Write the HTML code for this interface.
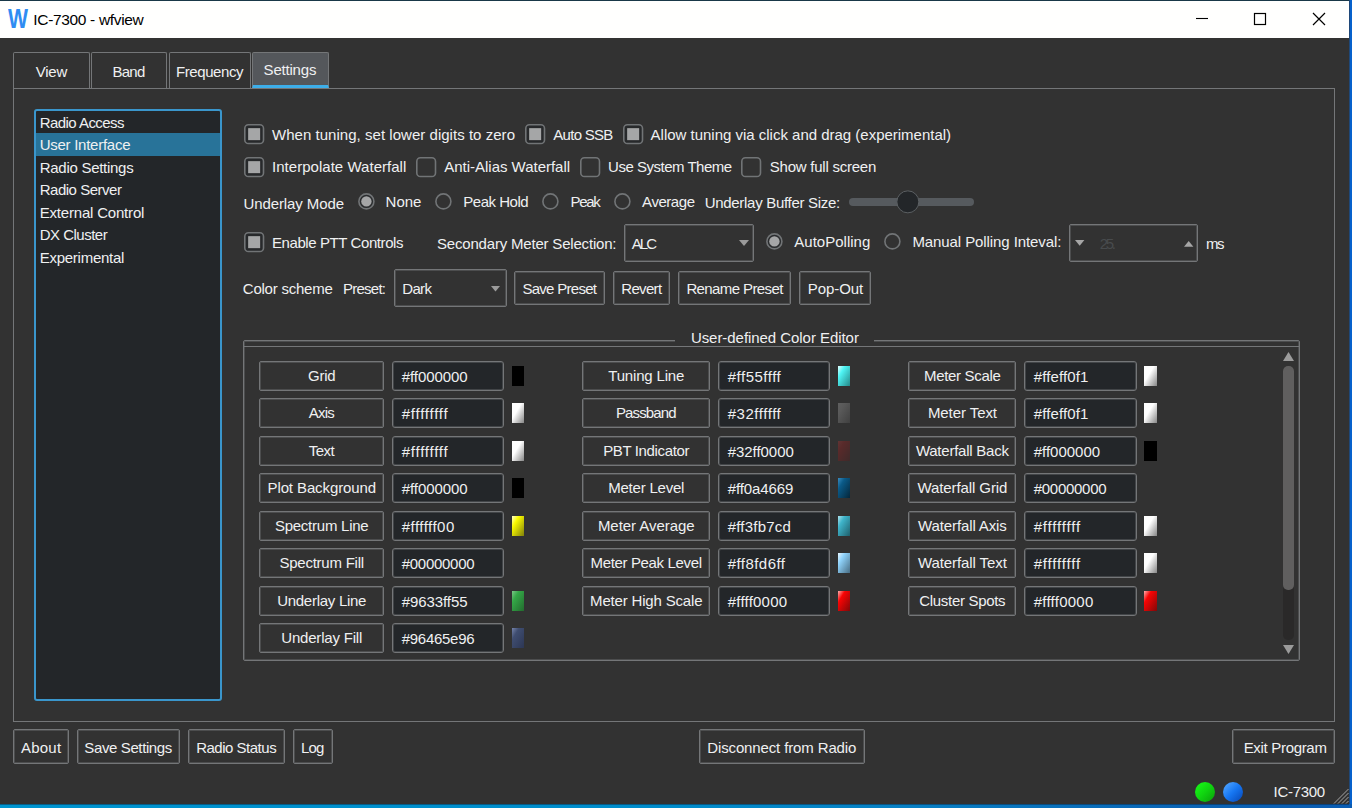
<!DOCTYPE html>
<html><head><meta charset="utf-8"><title>IC-7300 - wfview</title>
<style>
html,body{margin:0;padding:0}
body{width:1352px;height:808px;overflow:hidden;position:relative;background:linear-gradient(90deg,#0095d0 0%,#008ccb 50%,#0880c4 67%,#0a62b4 89%,#0a5cb2 100%);font-family:"Liberation Sans", sans-serif;color:#eff0f1}
#edge{position:absolute;left:1349px;top:0;width:3px;height:804px;background:linear-gradient(90deg,#1f4878 0,#1f4878 1px,#0661cc 1px)}
.b{position:absolute;box-sizing:border-box}
.s{position:absolute;overflow:visible}
.t{position:absolute;white-space:pre;line-height:20px;height:20px;font-size:15px;color:#eff0f1}
</style></head>
<body>
<div id="edge"></div>
<div style="position:absolute;left:0;top:0;width:1349px;height:804px;background:#323232"></div>
<div style="position:absolute;left:0;top:0;width:1349px;height:1px;background:#193848"></div>
<div style="position:absolute;left:0;top:1px;width:1349px;height:37px;background:#fffffe"></div>
<div style="position:absolute;left:0;top:804px;width:1349px;height:1px;background:rgba(10,30,50,.45)"></div>
<svg style="position:absolute;left:1190px;top:8px" width="150" height="24" viewBox="0 0 150 24"><path d="M6 10.5H18" stroke="#000" stroke-width="1.1" fill="none"/><rect x="64.5" y="5.5" width="11" height="11" stroke="#000" stroke-width="1.2" fill="none"/><path d="M123 5L135 17M135 5L123 17" stroke="#000" stroke-width="1.2" fill="none"/></svg>
<div class="b" style="left:13px;top:88px;width:1322px;height:634px;border:1px solid #747678;"></div>
<div class="b" style="left:13px;top:52px;width:77px;height:37px;border:1px solid #747678;border-bottom:none;border-radius:2px 2px 0 0;"></div>
<div class="b" style="left:91px;top:52px;width:76px;height:37px;border:1px solid #747678;border-bottom:none;border-radius:2px 2px 0 0;"></div>
<div class="b" style="left:168.5px;top:52px;width:82.5px;height:37px;border:1px solid #747678;border-bottom:none;border-radius:2px 2px 0 0;"></div>
<div class="b" style="left:252px;top:52px;width:77px;height:36px;border:1px solid #747678;border-bottom:3px solid #3daee9;border-radius:2px 2px 0 0;background:#54575b;"></div>
<div class="b" style="left:34px;top:109px;width:188px;height:592px;border:2px solid #3a96cc;border-radius:3px;background:#232629;"></div>
<div class="b" style="left:36px;top:133px;width:184px;height:23px;background:#287399;"></div>
<svg class="s" style="left:244px;top:124px" width="21" height="21"><rect x="0.8" y="0.8" width="18.7" height="18.7" rx="3.6" fill="#27292b" stroke="#717476" stroke-width="1.6"/><rect x="4.15" y="4.15" width="12" height="12" fill="#a5a6a7"/></svg>
<svg class="s" style="left:525px;top:124px" width="21" height="21"><rect x="0.8" y="0.8" width="18.7" height="18.7" rx="3.6" fill="#27292b" stroke="#717476" stroke-width="1.6"/><rect x="4.15" y="4.15" width="12" height="12" fill="#a5a6a7"/></svg>
<svg class="s" style="left:622.5px;top:124px" width="21" height="21"><rect x="0.8" y="0.8" width="18.7" height="18.7" rx="3.6" fill="#27292b" stroke="#717476" stroke-width="1.6"/><rect x="4.15" y="4.15" width="12" height="12" fill="#a5a6a7"/></svg>
<svg class="s" style="left:244px;top:157px" width="21" height="21"><rect x="0.8" y="0.8" width="18.7" height="18.7" rx="3.6" fill="#27292b" stroke="#717476" stroke-width="1.6"/><rect x="4.15" y="4.15" width="12" height="12" fill="#a5a6a7"/></svg>
<svg class="s" style="left:416.2px;top:157px" width="21" height="21"><rect x="0.8" y="0.8" width="18.7" height="18.7" rx="3.6" fill="none" stroke="#717476" stroke-width="1.6"/></svg>
<svg class="s" style="left:580.3px;top:157px" width="21" height="21"><rect x="0.8" y="0.8" width="18.7" height="18.7" rx="3.6" fill="none" stroke="#717476" stroke-width="1.6"/></svg>
<svg class="s" style="left:741.3px;top:157px" width="21" height="21"><rect x="0.8" y="0.8" width="18.7" height="18.7" rx="3.6" fill="none" stroke="#717476" stroke-width="1.6"/></svg>
<svg class="s" style="left:357.5px;top:192.7px" width="17" height="17"><circle cx="8.4" cy="8.4" r="7.5" fill="#2a2c2e" stroke="#717476" stroke-width="1.6"/><circle cx="8.4" cy="8.4" r="5.2" fill="#a5a6a7"/></svg>
<svg class="s" style="left:435px;top:192.7px" width="17" height="17"><circle cx="8.4" cy="8.4" r="7.5" fill="none" stroke="#717476" stroke-width="1.6"/></svg>
<svg class="s" style="left:542.4px;top:192.7px" width="17" height="17"><circle cx="8.4" cy="8.4" r="7.5" fill="none" stroke="#717476" stroke-width="1.6"/></svg>
<svg class="s" style="left:613.7px;top:192.7px" width="17" height="17"><circle cx="8.4" cy="8.4" r="7.5" fill="none" stroke="#717476" stroke-width="1.6"/></svg>
<div class="b" style="left:849px;top:198px;width:125px;height:8px;background:#565a5e;border-radius:4px;"></div>
<svg class="s" style="left:895px;top:189px" width="26" height="26"><circle cx="12.85" cy="12.85" r="11" fill="#232629" stroke="#5c6063" stroke-width="1"/></svg>
<svg class="s" style="left:244px;top:231.5px" width="21" height="21"><rect x="0.8" y="0.8" width="18.7" height="18.7" rx="3.6" fill="#27292b" stroke="#717476" stroke-width="1.6"/><rect x="4.15" y="4.15" width="12" height="12" fill="#a5a6a7"/></svg>
<div class="b" style="left:624px;top:224px;width:130px;height:38px;border:1px solid #747678;border-radius:2px;box-shadow:inset 0 0 0 1px rgba(118,121,124,.38);"></div>
<svg style="position:absolute;left:738.5px;top:240px" width="10" height="6"><path d="M0 0H10L5 6Z" fill="#9b9b9b"/></svg>
<svg class="s" style="left:766px;top:232.7px" width="17" height="17"><circle cx="8.4" cy="8.4" r="7.5" fill="#2a2c2e" stroke="#717476" stroke-width="1.6"/><circle cx="8.4" cy="8.4" r="5.2" fill="#a5a6a7"/></svg>
<svg class="s" style="left:883.5px;top:232.7px" width="17" height="17"><circle cx="8.4" cy="8.4" r="7.5" fill="none" stroke="#717476" stroke-width="1.6"/></svg>
<div class="b" style="left:1069px;top:224px;width:129px;height:38px;border:1px solid #747678;border-radius:2px;box-shadow:inset 0 0 0 1px rgba(118,121,124,.38);"></div>
<svg class="s" style="left:1075px;top:240px" width="10" height="6"><path d="M0 0H9.4L4.7 5.8Z" fill="#a6a6a6"/></svg>
<svg class="s" style="left:1183.8px;top:240.5px" width="10" height="6"><path d="M0 5.8H9.4L4.7 0Z" fill="#a6a6a6"/></svg>
<div class="b" style="left:394px;top:269px;width:113px;height:38px;border:1px solid #747678;border-radius:2px;box-shadow:inset 0 0 0 1px rgba(118,121,124,.38);"></div>
<svg style="position:absolute;left:490.5px;top:285.5px" width="9" height="6"><path d="M0 0H9L4.5 5.5Z" fill="#9b9b9b"/></svg>
<div class="b" style="left:514.2px;top:271px;width:90.5px;height:34px;border:1px solid #747678;border-radius:2px;box-shadow:inset 0 0 0 1px rgba(118,121,124,.38);"></div>
<div class="b" style="left:613px;top:271px;width:56.799999999999955px;height:34px;border:1px solid #747678;border-radius:2px;box-shadow:inset 0 0 0 1px rgba(118,121,124,.38);"></div>
<div class="b" style="left:678.1px;top:271px;width:113.29999999999995px;height:34px;border:1px solid #747678;border-radius:2px;box-shadow:inset 0 0 0 1px rgba(118,121,124,.38);"></div>
<div class="b" style="left:799.1px;top:271px;width:72.19999999999993px;height:34px;border:1px solid #747678;border-radius:2px;box-shadow:inset 0 0 0 1px rgba(118,121,124,.38);"></div>
<div class="b" style="left:243px;top:340px;width:1057px;height:321px;border:1px solid #747678;border-radius:2px;box-shadow:inset 0 0 0 1px rgba(118,121,124,.38);"></div>
<div class="b" style="left:674.5px;top:330px;width:199.5px;height:16px;background:#323232;"></div>
<div class="b" style="left:243.3px;top:346px;width:1056.5px;height:1px;background:#747678;"></div>
<svg style="position:absolute;left:1282.5px;top:352px" width="11" height="9"><path d="M0 9H11L5.5 0Z" fill="#9b9b9b"/></svg>
<div class="b" style="left:1283px;top:366px;width:11px;height:273.5px;background:#2a2929;border-radius:5px;"></div>
<div class="b" style="left:1283px;top:366px;width:11px;height:224px;background:#605f5f;border-radius:5px;"></div>
<svg style="position:absolute;left:1282.5px;top:644.5px" width="11" height="9"><path d="M0 0H11L5.5 9Z" fill="#9b9b9b"/></svg>
<div class="b" style="left:259px;top:361px;width:125px;height:30px;border:1px solid #747678;border-radius:2px;box-shadow:inset 0 0 0 1px rgba(118,121,124,.38);"></div>
<div class="b" style="left:392px;top:361px;width:112px;height:30px;border:1px solid #747678;border-radius:3px;background:#232629;box-shadow:inset 0 0 0 1px rgba(118,121,124,.38);"></div>
<div class="b" style="left:512px;top:366px;width:12px;height:20px;background:#000;"></div>
<div class="b" style="left:259px;top:398px;width:125px;height:30px;border:1px solid #747678;border-radius:2px;box-shadow:inset 0 0 0 1px rgba(118,121,124,.38);"></div>
<div class="b" style="left:392px;top:398px;width:112px;height:30px;border:1px solid #747678;border-radius:3px;background:#232629;box-shadow:inset 0 0 0 1px rgba(118,121,124,.38);"></div>
<div class="b" style="left:512px;top:403px;width:12px;height:20px;background:linear-gradient(121deg,#fff 0%,#fff 40%,#858585 100%);"></div>
<div class="b" style="left:259px;top:436px;width:125px;height:30px;border:1px solid #747678;border-radius:2px;box-shadow:inset 0 0 0 1px rgba(118,121,124,.38);"></div>
<div class="b" style="left:392px;top:436px;width:112px;height:30px;border:1px solid #747678;border-radius:3px;background:#232629;box-shadow:inset 0 0 0 1px rgba(118,121,124,.38);"></div>
<div class="b" style="left:512px;top:441px;width:12px;height:20px;background:linear-gradient(121deg,#fff 0%,#fff 40%,#858585 100%);"></div>
<div class="b" style="left:259px;top:473px;width:125px;height:30px;border:1px solid #747678;border-radius:2px;box-shadow:inset 0 0 0 1px rgba(118,121,124,.38);"></div>
<div class="b" style="left:392px;top:473px;width:112px;height:30px;border:1px solid #747678;border-radius:3px;background:#232629;box-shadow:inset 0 0 0 1px rgba(118,121,124,.38);"></div>
<div class="b" style="left:512px;top:478px;width:12px;height:20px;background:#000;"></div>
<div class="b" style="left:259px;top:511px;width:125px;height:30px;border:1px solid #747678;border-radius:2px;box-shadow:inset 0 0 0 1px rgba(118,121,124,.38);"></div>
<div class="b" style="left:392px;top:511px;width:112px;height:30px;border:1px solid #747678;border-radius:3px;background:#232629;box-shadow:inset 0 0 0 1px rgba(118,121,124,.38);"></div>
<div class="b" style="left:512px;top:516px;width:12px;height:20px;background:linear-gradient(121deg,#ffffd0 0%,#fbfb00 30%,#80800a 100%);"></div>
<div class="b" style="left:259px;top:548px;width:125px;height:30px;border:1px solid #747678;border-radius:2px;box-shadow:inset 0 0 0 1px rgba(118,121,124,.38);"></div>
<div class="b" style="left:392px;top:548px;width:112px;height:30px;border:1px solid #747678;border-radius:3px;background:#232629;box-shadow:inset 0 0 0 1px rgba(118,121,124,.38);"></div>
<div class="b" style="left:259px;top:586px;width:125px;height:30px;border:1px solid #747678;border-radius:2px;box-shadow:inset 0 0 0 1px rgba(118,121,124,.38);"></div>
<div class="b" style="left:392px;top:586px;width:112px;height:30px;border:1px solid #747678;border-radius:3px;background:#232629;box-shadow:inset 0 0 0 1px rgba(118,121,124,.38);"></div>
<div class="b" style="left:512px;top:591px;width:12px;height:20px;background:linear-gradient(121deg,#7cc888 0%,#34a747 30%,#226b2e 100%);"></div>
<div class="b" style="left:259px;top:623px;width:125px;height:30px;border:1px solid #747678;border-radius:2px;box-shadow:inset 0 0 0 1px rgba(118,121,124,.38);"></div>
<div class="b" style="left:392px;top:623px;width:112px;height:30px;border:1px solid #747678;border-radius:3px;background:#232629;box-shadow:inset 0 0 0 1px rgba(118,121,124,.38);"></div>
<div class="b" style="left:512px;top:628px;width:12px;height:20px;background:linear-gradient(121deg,#7684aa 0%,#3f4d70 30%,#2c3654 100%);"></div>
<div class="b" style="left:582px;top:361px;width:128px;height:30px;border:1px solid #747678;border-radius:2px;box-shadow:inset 0 0 0 1px rgba(118,121,124,.38);"></div>
<div class="b" style="left:718px;top:361px;width:112px;height:30px;border:1px solid #747678;border-radius:3px;background:#232629;box-shadow:inset 0 0 0 1px rgba(118,121,124,.38);"></div>
<div class="b" style="left:838px;top:366px;width:12px;height:20px;background:linear-gradient(121deg,#e8ffff 0%,#4ff5f5 30%,#258888 100%);"></div>
<div class="b" style="left:582px;top:398px;width:128px;height:30px;border:1px solid #747678;border-radius:2px;box-shadow:inset 0 0 0 1px rgba(118,121,124,.38);"></div>
<div class="b" style="left:718px;top:398px;width:112px;height:30px;border:1px solid #747678;border-radius:3px;background:#232629;box-shadow:inset 0 0 0 1px rgba(118,121,124,.38);"></div>
<div class="b" style="left:838px;top:403px;width:12px;height:20px;background:linear-gradient(121deg,#606060 0%,#595959 30%,#404040 100%);"></div>
<div class="b" style="left:582px;top:436px;width:128px;height:30px;border:1px solid #747678;border-radius:2px;box-shadow:inset 0 0 0 1px rgba(118,121,124,.38);"></div>
<div class="b" style="left:718px;top:436px;width:112px;height:30px;border:1px solid #747678;border-radius:3px;background:#232629;box-shadow:inset 0 0 0 1px rgba(118,121,124,.38);"></div>
<div class="b" style="left:838px;top:441px;width:12px;height:20px;background:linear-gradient(121deg,#603434 0%,#582a2a 30%,#3e2a2a 100%);"></div>
<div class="b" style="left:582px;top:473px;width:128px;height:30px;border:1px solid #747678;border-radius:2px;box-shadow:inset 0 0 0 1px rgba(118,121,124,.38);"></div>
<div class="b" style="left:718px;top:473px;width:112px;height:30px;border:1px solid #747678;border-radius:3px;background:#232629;box-shadow:inset 0 0 0 1px rgba(118,121,124,.38);"></div>
<div class="b" style="left:838px;top:478px;width:12px;height:20px;background:linear-gradient(121deg,#3a8cc0 0%,#0a5a88 30%,#05263a 100%);"></div>
<div class="b" style="left:582px;top:511px;width:128px;height:30px;border:1px solid #747678;border-radius:2px;box-shadow:inset 0 0 0 1px rgba(118,121,124,.38);"></div>
<div class="b" style="left:718px;top:511px;width:112px;height:30px;border:1px solid #747678;border-radius:3px;background:#232629;box-shadow:inset 0 0 0 1px rgba(118,121,124,.38);"></div>
<div class="b" style="left:838px;top:516px;width:12px;height:20px;background:linear-gradient(121deg,#b0e4ee 0%,#3fb4ca 30%,#1f5e6a 100%);"></div>
<div class="b" style="left:582px;top:548px;width:128px;height:30px;border:1px solid #747678;border-radius:2px;box-shadow:inset 0 0 0 1px rgba(118,121,124,.38);"></div>
<div class="b" style="left:718px;top:548px;width:112px;height:30px;border:1px solid #747678;border-radius:3px;background:#232629;box-shadow:inset 0 0 0 1px rgba(118,121,124,.38);"></div>
<div class="b" style="left:838px;top:553px;width:12px;height:20px;background:linear-gradient(121deg,#e8f6ff 0%,#8fd2fa 30%,#486c82 100%);"></div>
<div class="b" style="left:582px;top:586px;width:128px;height:30px;border:1px solid #747678;border-radius:2px;box-shadow:inset 0 0 0 1px rgba(118,121,124,.38);"></div>
<div class="b" style="left:718px;top:586px;width:112px;height:30px;border:1px solid #747678;border-radius:3px;background:#232629;box-shadow:inset 0 0 0 1px rgba(118,121,124,.38);"></div>
<div class="b" style="left:838px;top:591px;width:12px;height:20px;background:linear-gradient(121deg,#ffb0b0 0%,#f80404 30%,#800808 100%);"></div>
<div class="b" style="left:908px;top:361px;width:108.29999999999995px;height:30px;border:1px solid #747678;border-radius:2px;box-shadow:inset 0 0 0 1px rgba(118,121,124,.38);"></div>
<div class="b" style="left:1024px;top:361px;width:112.5px;height:30px;border:1px solid #747678;border-radius:3px;background:#232629;box-shadow:inset 0 0 0 1px rgba(118,121,124,.38);"></div>
<div class="b" style="left:1144px;top:366px;width:13px;height:20px;background:linear-gradient(121deg,#fff 0%,#fff 40%,#858585 100%);"></div>
<div class="b" style="left:908px;top:398px;width:108.29999999999995px;height:30px;border:1px solid #747678;border-radius:2px;box-shadow:inset 0 0 0 1px rgba(118,121,124,.38);"></div>
<div class="b" style="left:1024px;top:398px;width:112.5px;height:30px;border:1px solid #747678;border-radius:3px;background:#232629;box-shadow:inset 0 0 0 1px rgba(118,121,124,.38);"></div>
<div class="b" style="left:1144px;top:403px;width:13px;height:20px;background:linear-gradient(121deg,#fff 0%,#fff 40%,#858585 100%);"></div>
<div class="b" style="left:908px;top:436px;width:108.29999999999995px;height:30px;border:1px solid #747678;border-radius:2px;box-shadow:inset 0 0 0 1px rgba(118,121,124,.38);"></div>
<div class="b" style="left:1024px;top:436px;width:112.5px;height:30px;border:1px solid #747678;border-radius:3px;background:#232629;box-shadow:inset 0 0 0 1px rgba(118,121,124,.38);"></div>
<div class="b" style="left:1144px;top:441px;width:13px;height:20px;background:#000;"></div>
<div class="b" style="left:908px;top:473px;width:108.29999999999995px;height:30px;border:1px solid #747678;border-radius:2px;box-shadow:inset 0 0 0 1px rgba(118,121,124,.38);"></div>
<div class="b" style="left:1024px;top:473px;width:112.5px;height:30px;border:1px solid #747678;border-radius:3px;background:#232629;box-shadow:inset 0 0 0 1px rgba(118,121,124,.38);"></div>
<div class="b" style="left:908px;top:511px;width:108.29999999999995px;height:30px;border:1px solid #747678;border-radius:2px;box-shadow:inset 0 0 0 1px rgba(118,121,124,.38);"></div>
<div class="b" style="left:1024px;top:511px;width:112.5px;height:30px;border:1px solid #747678;border-radius:3px;background:#232629;box-shadow:inset 0 0 0 1px rgba(118,121,124,.38);"></div>
<div class="b" style="left:1144px;top:516px;width:13px;height:20px;background:linear-gradient(121deg,#fff 0%,#fff 40%,#858585 100%);"></div>
<div class="b" style="left:908px;top:548px;width:108.29999999999995px;height:30px;border:1px solid #747678;border-radius:2px;box-shadow:inset 0 0 0 1px rgba(118,121,124,.38);"></div>
<div class="b" style="left:1024px;top:548px;width:112.5px;height:30px;border:1px solid #747678;border-radius:3px;background:#232629;box-shadow:inset 0 0 0 1px rgba(118,121,124,.38);"></div>
<div class="b" style="left:1144px;top:553px;width:13px;height:20px;background:linear-gradient(121deg,#fff 0%,#fff 40%,#858585 100%);"></div>
<div class="b" style="left:908px;top:586px;width:108.29999999999995px;height:30px;border:1px solid #747678;border-radius:2px;box-shadow:inset 0 0 0 1px rgba(118,121,124,.38);"></div>
<div class="b" style="left:1024px;top:586px;width:112.5px;height:30px;border:1px solid #747678;border-radius:3px;background:#232629;box-shadow:inset 0 0 0 1px rgba(118,121,124,.38);"></div>
<div class="b" style="left:1144px;top:591px;width:13px;height:20px;background:linear-gradient(121deg,#ffb0b0 0%,#f80404 30%,#800808 100%);"></div>
<div class="b" style="left:13.2px;top:729px;width:55.8px;height:35px;border:1px solid #747678;border-radius:2px;box-shadow:inset 0 0 0 1px rgba(118,121,124,.38);"></div>
<div class="b" style="left:77.2px;top:729px;width:102.60000000000001px;height:35px;border:1px solid #747678;border-radius:2px;box-shadow:inset 0 0 0 1px rgba(118,121,124,.38);"></div>
<div class="b" style="left:188.1px;top:729px;width:96.9px;height:35px;border:1px solid #747678;border-radius:2px;box-shadow:inset 0 0 0 1px rgba(118,121,124,.38);"></div>
<div class="b" style="left:293px;top:729px;width:39.69999999999999px;height:35px;border:1px solid #747678;border-radius:2px;box-shadow:inset 0 0 0 1px rgba(118,121,124,.38);"></div>
<div class="b" style="left:699.2px;top:729px;width:165.79999999999995px;height:35px;border:1px solid #747678;border-radius:2px;box-shadow:inset 0 0 0 1px rgba(118,121,124,.38);"></div>
<div class="b" style="left:1232.3px;top:729px;width:102.5px;height:35px;border:1px solid #747678;border-radius:2px;box-shadow:inset 0 0 0 1px rgba(118,121,124,.38);"></div>
<div class="b" style="left:1195px;top:782px;width:20px;height:20px;border-radius:50%;background:linear-gradient(135deg,#16f516 12%,#10d410 50%,#0ba60b 92%);"></div>
<div class="b" style="left:1222.5px;top:782px;width:20px;height:20px;border-radius:50%;background:linear-gradient(135deg,#4fa4ff 8%,#1676f2 50%,#094cbc 92%);"></div>
<svg style="position:absolute;left:1333px;top:788px" width="16" height="16"><path d="M1 15.5L15.5 1M5 15.5L15.5 5M9 15.5L15.5 9M13 15.5L15.5 13" stroke="#b2b2b2" stroke-width="0.9" fill="none"/></svg>
<span class="t" style="left:8.00px;top:8.73px;font-size:27.5px;transform:scaleX(0.770);transform-origin:0 0;color:#2f8cf2;font-weight:bold;">W</span>
<span class="t" style="left:33.30px;top:10.00px;font-size:15.5px;letter-spacing:-0.329px;color:#000;">IC-7300 - wfview</span>
<span class="t" style="left:35.65px;top:62.00px;letter-spacing:-0.183px;">View</span>
<span class="t" style="left:112.40px;top:62.00px;letter-spacing:-0.682px;">Band</span>
<span class="t" style="left:176.05px;top:62.00px;letter-spacing:-0.422px;">Frequency</span>
<span class="t" style="left:263.60px;top:60.00px;letter-spacing:-0.200px;">Settings</span>
<span class="t" style="left:39.70px;top:113.00px;letter-spacing:-0.545px;">Radio Access</span>
<span class="t" style="left:39.70px;top:135.00px;letter-spacing:-0.263px;">User Interface</span>
<span class="t" style="left:39.70px;top:158.00px;letter-spacing:-0.274px;">Radio Settings</span>
<span class="t" style="left:39.70px;top:180.00px;letter-spacing:-0.486px;">Radio Server</span>
<span class="t" style="left:39.70px;top:203.00px;letter-spacing:-0.191px;">External Control</span>
<span class="t" style="left:39.70px;top:225.00px;letter-spacing:-0.503px;">DX Cluster</span>
<span class="t" style="left:39.70px;top:248.00px;letter-spacing:-0.259px;">Experimental</span>
<span class="t" style="left:272.00px;top:125.00px;letter-spacing:0.033px;">When tuning, set lower digits to zero</span>
<span class="t" style="left:553.30px;top:125.00px;letter-spacing:-0.721px;">Auto SSB</span>
<span class="t" style="left:650.60px;top:125.00px;letter-spacing:-0.011px;">Allow tuning via click and drag (experimental)</span>
<span class="t" style="left:272.00px;top:157.00px;letter-spacing:0.031px;">Interpolate Waterfall</span>
<span class="t" style="left:444.30px;top:157.00px;letter-spacing:-0.019px;">Anti-Alias Waterfall</span>
<span class="t" style="left:608.10px;top:157.00px;letter-spacing:-0.496px;">Use System Theme</span>
<span class="t" style="left:769.80px;top:157.00px;letter-spacing:-0.237px;">Show full screen</span>
<span class="t" style="left:243.50px;top:194.00px;letter-spacing:-0.102px;">Underlay Mode</span>
<span class="t" style="left:385.60px;top:192.00px;letter-spacing:-0.020px;">None</span>
<span class="t" style="left:463.30px;top:192.00px;letter-spacing:-0.477px;">Peak Hold</span>
<span class="t" style="left:570.50px;top:192.00px;letter-spacing:-1.334px;">Peak</span>
<span class="t" style="left:642.10px;top:192.00px;letter-spacing:-0.452px;">Average</span>
<span class="t" style="left:704.70px;top:193.00px;letter-spacing:-0.298px;">Underlay Buffer Size:</span>
<span class="t" style="left:272.00px;top:233.00px;letter-spacing:-0.415px;">Enable PTT Controls</span>
<span class="t" style="left:437.00px;top:234.00px;letter-spacing:-0.191px;">Secondary Meter Selection:</span>
<span class="t" style="left:631.80px;top:234.00px;letter-spacing:-1.994px;">ALC</span>
<span class="t" style="left:794.30px;top:232.00px;letter-spacing:0.011px;">AutoPolling</span>
<span class="t" style="left:912.40px;top:232.00px;letter-spacing:-0.088px;">Manual Polling Inteval:</span>
<span class="t" style="left:1099.70px;top:234.00px;letter-spacing:-2.330px;color:#484b4d;">25.</span>
<span class="t" style="left:1206.00px;top:234.00px;letter-spacing:-1.500px;">ms</span>
<span class="t" style="left:242.80px;top:279.00px;letter-spacing:-0.232px;">Color scheme</span>
<span class="t" style="left:343.00px;top:279.00px;letter-spacing:-0.755px;">Preset:</span>
<span class="t" style="left:402.30px;top:279.00px;letter-spacing:-0.691px;">Dark</span>
<span class="t" style="left:522.40px;top:279.00px;letter-spacing:-0.712px;">Save Preset</span>
<span class="t" style="left:621.30px;top:279.00px;letter-spacing:-0.678px;">Revert</span>
<span class="t" style="left:686.40px;top:279.00px;letter-spacing:-0.602px;">Rename Preset</span>
<span class="t" style="left:807.70px;top:279.00px;letter-spacing:-0.046px;">Pop-Out</span>
<span class="t" style="left:690.90px;top:328.00px;letter-spacing:-0.052px;">User-defined Color Editor</span>
<span class="t" style="left:308.10px;top:366.00px;letter-spacing:-0.315px;">Grid</span>
<span class="t" style="left:401.70px;top:367.00px;letter-spacing:-0.071px;">#ff000000</span>
<span class="t" style="left:308.85px;top:403.00px;letter-spacing:-0.815px;">Axis</span>
<span class="t" style="left:401.70px;top:404.00px;letter-spacing:0.775px;">#ffffffff</span>
<span class="t" style="left:308.85px;top:441.00px;letter-spacing:-0.539px;">Text</span>
<span class="t" style="left:401.70px;top:442.00px;letter-spacing:0.775px;">#ffffffff</span>
<span class="t" style="left:267.50px;top:478.00px;letter-spacing:-0.106px;">Plot Background</span>
<span class="t" style="left:401.70px;top:479.00px;letter-spacing:-0.071px;">#ff000000</span>
<span class="t" style="left:274.90px;top:516.00px;letter-spacing:-0.243px;">Spectrum Line</span>
<span class="t" style="left:401.70px;top:517.00px;letter-spacing:0.489px;">#ffffff00</span>
<span class="t" style="left:279.45px;top:553.00px;letter-spacing:-0.236px;">Spectrum Fill</span>
<span class="t" style="left:401.70px;top:554.00px;letter-spacing:-0.274px;">#00000000</span>
<span class="t" style="left:277.15px;top:591.00px;letter-spacing:-0.272px;">Underlay Line</span>
<span class="t" style="left:401.70px;top:592.00px;letter-spacing:-0.071px;">#9633ff55</span>
<span class="t" style="left:281.30px;top:628.00px;letter-spacing:-0.197px;">Underlay Fill</span>
<span class="t" style="left:401.70px;top:629.00px;letter-spacing:-0.274px;">#96465e96</span>
<span class="t" style="left:608.20px;top:366.00px;letter-spacing:-0.164px;">Tuning Line</span>
<span class="t" style="left:727.70px;top:367.00px;letter-spacing:0.518px;">#ff55ffff</span>
<span class="t" style="left:615.90px;top:403.00px;letter-spacing:-0.846px;">Passband</span>
<span class="t" style="left:727.70px;top:404.00px;letter-spacing:0.552px;">#32ffffff</span>
<span class="t" style="left:603.15px;top:441.00px;letter-spacing:-0.359px;">PBT Indicator</span>
<span class="t" style="left:727.70px;top:442.00px;letter-spacing:-0.046px;">#32ff0000</span>
<span class="t" style="left:608.20px;top:478.00px;letter-spacing:-0.217px;">Meter Level</span>
<span class="t" style="left:727.70px;top:479.00px;letter-spacing:-0.109px;">#ff0a4669</span>
<span class="t" style="left:597.90px;top:516.00px;letter-spacing:-0.040px;">Meter Average</span>
<span class="t" style="left:727.70px;top:517.00px;letter-spacing:0.206px;">#ff3fb7cd</span>
<span class="t" style="left:590.60px;top:553.00px;letter-spacing:-0.356px;">Meter Peak Level</span>
<span class="t" style="left:727.70px;top:554.00px;letter-spacing:0.454px;">#ff8fd6ff</span>
<span class="t" style="left:590.10px;top:591.00px;letter-spacing:-0.177px;">Meter High Scale</span>
<span class="t" style="left:727.70px;top:592.00px;letter-spacing:0.228px;">#ffff0000</span>
<span class="t" style="left:924.10px;top:366.00px;letter-spacing:-0.335px;">Meter Scale</span>
<span class="t" style="left:1033.70px;top:367.00px;letter-spacing:0.116px;">#ffeff0f1</span>
<span class="t" style="left:927.90px;top:403.00px;letter-spacing:-0.072px;">Meter Text</span>
<span class="t" style="left:1033.70px;top:404.00px;letter-spacing:0.116px;">#ffeff0f1</span>
<span class="t" style="left:915.90px;top:441.00px;letter-spacing:-0.234px;">Waterfall Back</span>
<span class="t" style="left:1033.70px;top:442.00px;letter-spacing:-0.009px;">#ff000000</span>
<span class="t" style="left:917.45px;top:478.00px;letter-spacing:-0.088px;">Waterfall Grid</span>
<span class="t" style="left:1033.70px;top:479.00px;letter-spacing:-0.274px;">#00000000</span>
<span class="t" style="left:918.05px;top:516.00px;letter-spacing:-0.116px;">Waterfall Axis</span>
<span class="t" style="left:1033.70px;top:517.00px;letter-spacing:0.838px;">#ffffffff</span>
<span class="t" style="left:918.05px;top:553.00px;letter-spacing:-0.095px;">Waterfall Text</span>
<span class="t" style="left:1033.70px;top:554.00px;letter-spacing:0.838px;">#ffffffff</span>
<span class="t" style="left:919.30px;top:591.00px;letter-spacing:-0.312px;">Cluster Spots</span>
<span class="t" style="left:1033.70px;top:592.00px;letter-spacing:0.253px;">#ffff0000</span>
<span class="t" style="left:20.90px;top:738.00px;letter-spacing:0.249px;">About</span>
<span class="t" style="left:84.30px;top:738.00px;letter-spacing:-0.380px;">Save Settings</span>
<span class="t" style="left:196.15px;top:738.00px;letter-spacing:-0.490px;">Radio Status</span>
<span class="t" style="left:301.00px;top:738.00px;letter-spacing:-0.816px;">Log</span>
<span class="t" style="left:707.25px;top:738.00px;letter-spacing:-0.132px;">Disconnect from Radio</span>
<span class="t" style="left:1243.70px;top:738.00px;letter-spacing:-0.318px;">Exit Program</span>
<span class="t" style="left:1273.60px;top:782.00px;letter-spacing:-0.312px;">IC-7300</span>
</body></html>
